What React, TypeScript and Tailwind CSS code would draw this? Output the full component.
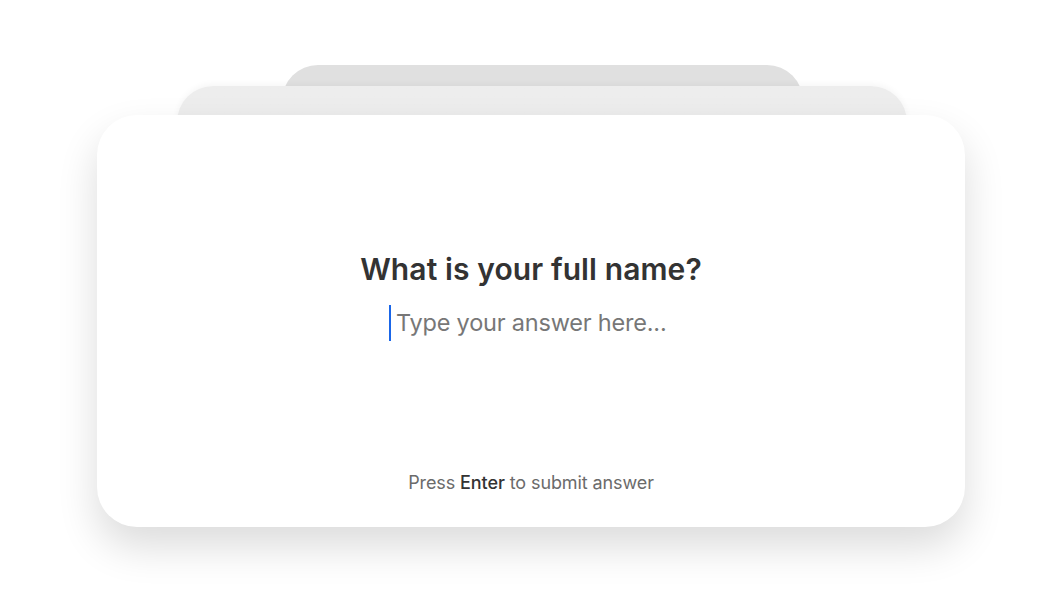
import React, { useState } from 'react';

export default function App() {
  const [answer, setAnswer] = useState('');

  return (
    <div className="w-full h-[592px] bg-white overflow-hidden pt-[115px] pl-[97px] font-['Inter',sans-serif]">
      <div className="relative w-[868px] h-[412px]">
        {/* stacked cards behind */}
        <div className="absolute top-[-50px] left-[185px] right-[162px] h-[80px] rounded-[36px] bg-[#e0e0e0]" />
        <div className="absolute top-[-29px] left-[80px] right-[58px] h-[80px] rounded-[36px] bg-gradient-to-b from-[#ededed] from-40% to-[#d9d9d9] shadow-[0_-2px_6px_rgba(0,0,0,0.04)]" />

        {/* main card */}
        <div className="relative h-full rounded-[40px] bg-white shadow-[0_20px_40px_rgba(0,0,0,0.14)] flex flex-col items-center pt-[136px] pb-[32px]">
          <h1 className="text-[30px] leading-[36px] font-semibold text-[#333333] tracking-[0.1px]">
            What is your full name?
          </h1>
          <div className="mt-[16px] flex items-center h-[40px]">
            <span className="w-[2px] h-[36px] bg-[#1a66e8] mr-[5px]" />
            <input
              value={answer}
              onChange={(e) => setAnswer(e.target.value)}
              placeholder="Type your answer here..."
              className="w-[277px] text-[23.5px] leading-[32px] text-[#333333] placeholder:text-[#777777] outline-none bg-transparent tracking-[-0.2px]"
            />
          </div>
          <div className="flex-1" />
          <p className="text-[18px] leading-[24px] text-[#6b6b6b] tracking-[-0.1px]">
            Press <span className="font-medium text-[#333333]">Enter</span> to submit answer
          </p>
        </div>
      </div>
    </div>
  );
}
